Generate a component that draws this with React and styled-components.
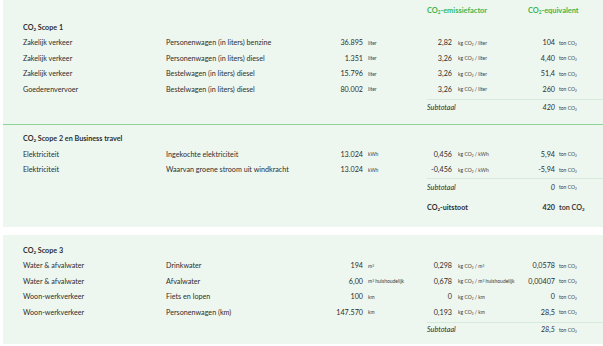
import React from "react";
import styled, { createGlobalStyle } from "styled-components";

const Global = createGlobalStyle`
  html, body { margin: 0; padding: 0; background: #ffffff; }
  body { font-family: Lato, "Open Sans", sans-serif; color: #2e2e2e; }
`;

const Page = styled.div`
  width: 603px;
  height: 346px;
  overflow: hidden;
  background: #ffffff;
`;

const Panel = styled.section`
  margin-left: 3px;
  width: 600px;
  box-sizing: border-box;
  background: #eef7ef;
  padding: ${(p) => p.$pad};
  border-bottom: ${(p) => (p.$divider ? "1px solid #8fd39b" : "none")};
  margin-bottom: ${(p) => p.$gap || "0px"};
`;

const Grid = styled.div`
  display: grid;
  grid-template-columns: 143px 157px 40px 64px 25px 68px 35px 1fr;
  align-items: center;
  font-size: 7.2px;
`;

const Row = styled.div`
  display: contents;
`;

const Cell = styled.div`
  height: ${(p) => p.$h || "15.5px"};
  display: flex;
  align-items: center;
  justify-content: ${(p) => (p.$right ? "flex-end" : "flex-start")};
  padding-left: ${(p) => p.$pl || "0px"};
  grid-column: ${(p) => p.$col || "auto"};
  white-space: nowrap;
  font-weight: ${(p) => (p.$bold ? 700 : 400)};
  font-style: ${(p) => (p.$italic ? "italic" : "normal")};
  border-top: ${(p) => (p.$line ? "1px solid #d5eadb" : "none")};
  margin-top: ${(p) => p.$mt || "0px"};
`;

const Head = styled(Cell)`
  color: #3bb54f;
  font-weight: 700;
  font-size: 7.4px;
`;

const Unit = styled.span`
  font-size: ${(p) => (p.$big ? "7.2px" : "5px")};
  font-weight: ${(p) => (p.$big ? 700 : 400)};
  font-style: normal;
  color: #3a3a3a;
`;

const Sub = styled.sub`
  font-size: 0.62em;
  vertical-align: -0.25em;
  line-height: 0;
`;

const Sup = styled.sup`
  font-size: 0.62em;
  vertical-align: 0.45em;
  line-height: 0;
`;

const CO2 = () => (
  <>
    CO<Sub>2</Sub>
  </>
);

const Title = styled(Cell)`
  font-weight: 700;
  grid-column: 1 / -1;
`;

const m3 = (
  <>
    m<Sup>3</Sup>
  </>
);

const scope1 = [
  ["Zakelijk verkeer", "Personenwagen (in liters) benzine", "36.895", "liter", "2,82", "liter", "104"],
  ["Zakelijk verkeer", "Personenwagen (in liters) diesel", "1.351", "liter", "3,26", "liter", "4,40"],
  ["Zakelijk verkeer", "Bestelwagen (in liters) diesel", "15.796", "liter", "3,26", "liter", "51,4"],
  ["Goederenvervoer", "Bestelwagen (in liters) diesel", "80.002", "liter", "3,26", "liter", "260"],
];

const scope2 = [
  ["Elektriciteit", "Ingekochte elektriciteit", "13.024", "kWh", "0,456", "kWh", "5,94"],
  ["Elektriciteit", "Waarvan groene stroom uit windkracht", "13.024", "kWh", "-0,456", "kWh", "-5,94"],
];

const scope3 = [
  ["Water & afvalwater", "Drinkwater", "194", m3, "0,298", m3, "0,0578"],
  ["Water & afvalwater", "Afvalwater", "6,00", <>{m3} huishoudelijk</>, "0,678", <>{m3} huishoudelijk</>, "0,00407"],
  ["Woon-werkverkeer", "Fiets en lopen", "100", "km", "0", "km", "0"],
  ["Woon-werkverkeer", "Personenwagen (km)", "147.570", "km", "0,193", "km", "28,5"],
];

const DataRow = ({ r }) => (
  <Row>
    <Cell $col="1">{r[0]}</Cell>
    <Cell $col="2">{r[1]}</Cell>
    <Cell $col="3" $right>{r[2]}</Cell>
    <Cell $col="4" $pl="5px">
      <Unit>{r[3]}</Unit>
    </Cell>
    <Cell $col="5" $right>{r[4]}</Cell>
    <Cell $col="6" $pl="6px">
      <Unit>
        kg <CO2 /> / {r[5]}
      </Unit>
    </Cell>
    <Cell $col="7" $right>{r[6]}</Cell>
    <Cell $col="8" $pl="4px">
      <Unit>
        ton <CO2 />
      </Unit>
    </Cell>
  </Row>
);

const Subtotal = ({ value, mt, h }) => (
  <Row>
    <Cell $col="5 / span 2" $italic $line $mt={mt} $h={h}>
      Subtotaal
    </Cell>
    <Cell $col="7" $right $italic $line $mt={mt} $h={h}>
      {value}
    </Cell>
    <Cell $col="8" $pl="4px" $line $mt={mt} $h={h}>
      <Unit>
        ton <CO2 />
      </Unit>
    </Cell>
  </Row>
);

export default function App() {
  return (
    <Page>
      <Global />
      <Panel $pad="3px 0 8px 20px" $divider>
        <Grid>
          <Row>
            <Head $col="5 / span 2" $h="14px">
              <span>
                <CO2 />-emissiefactor
              </span>
            </Head>
            <Head $col="7 / span 2" $pl="8px" $h="14px">
              <span>
                <CO2 />-equivalent
              </span>
            </Head>
          </Row>
          <Title $mt="2.25px">
            <span>
              <CO2 /> Scope 1
            </span>
          </Title>
          {scope1.map((r, i) => (
            <DataRow key={i} r={r} />
          ))}
          <Subtotal value="420" mt="2px" h="16px" />
        </Grid>
      </Panel>
      <Panel $pad="6px 0 10px 20px" $gap="8px">
        <Grid>
          <Title>
            <span>
              <CO2 /> Scope 2 en Business travel
            </span>
          </Title>
          {scope2.map((r, i) => (
            <DataRow key={i} r={r} />
          ))}
          <Subtotal value="0" mt="1px" h="16px" />
          <Row>
            <Cell $col="5 / span 2" $bold $h="20px" $mt="2px">
              <span>
                <CO2 />-uitstoot
              </span>
            </Cell>
            <Cell $col="7" $right $bold $h="20px" $mt="2px">
              420
            </Cell>
            <Cell $col="8" $pl="4px" $h="20px" $mt="2px">
              <Unit $big>
                ton <CO2 />
              </Unit>
            </Cell>
          </Row>
        </Grid>
      </Panel>
      <Panel $pad="7px 0 7px 20px">
        <Grid>
          <Title>
            <span>
              <CO2 /> Scope 3
            </span>
          </Title>
          {scope3.map((r, i) => (
            <DataRow key={i} r={r} />
          ))}
          <Subtotal value="28,5" mt="2px" h="14px" />
        </Grid>
      </Panel>
    </Page>
  );
}
